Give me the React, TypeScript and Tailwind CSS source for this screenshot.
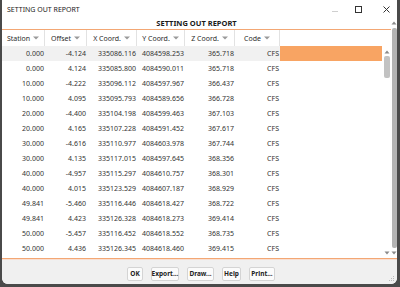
import React from "react";

const rows: string[][] = [
  ["0.000", "-4.124", "335086.116", "4084598.253", "365.718", "CFS"],
  ["0.000", "4.124", "335085.800", "4084590.011", "365.718", "CFS"],
  ["10.000", "-4.222", "335096.112", "4084597.967", "366.437", "CFS"],
  ["10.000", "4.095", "335095.793", "4084589.656", "366.728", "CFS"],
  ["20.000", "-4.400", "335104.198", "4084599.463", "367.103", "CFS"],
  ["20.000", "4.165", "335107.228", "4084591.452", "367.617", "CFS"],
  ["30.000", "-4.616", "335110.977", "4084603.978", "367.744", "CFS"],
  ["30.000", "4.135", "335117.015", "4084597.645", "368.356", "CFS"],
  ["40.000", "-4.957", "335115.297", "4084610.757", "368.301", "CFS"],
  ["40.000", "4.015", "335123.529", "4084607.187", "368.929", "CFS"],
  ["49.841", "-5.460", "335116.446", "4084618.427", "368.722", "CFS"],
  ["49.841", "4.423", "335126.328", "4084618.273", "369.414", "CFS"],
  ["50.000", "-5.457", "335116.452", "4084618.552", "368.735", "CFS"],
  ["50.000", "4.436", "335126.345", "4084618.460", "369.415", "CFS"],
];

const cols = [
  { name: "Station", w: "w-[43px]" },
  { name: "Offset", w: "w-[42px]" },
  { name: "X Coord.", w: "w-[50px]" },
  { name: "Y Coord.", w: "w-[48px]" },
  { name: "Z Coord.", w: "w-[50px]" },
  { name: "Code", w: "w-[45px]" },
];

function Tri() {
  return (
    <svg width="6" height="4" viewBox="0 0 6 4" className="ml-[3px]">
      <path d="M0 0.5 L6 0.5 L3 3.5 Z" fill="#9a9a9a" />
    </svg>
  );
}

function Up() {
  return (
    <svg width="6" height="4" viewBox="0 0 6 4">
      <path d="M0.5 3.5 L5.5 3.5 L3 0.5 Z" fill="#8a8a8a" />
    </svg>
  );
}
function Down() {
  return (
    <svg width="6" height="4" viewBox="0 0 6 4">
      <path d="M0.5 0.5 L5.5 0.5 L3 3.5 Z" fill="#8a8a8a" />
    </svg>
  );
}

function Btn({ label, w }: { label: string; w: string }) {
  return (
    <div
      className={`${w} h-[14px] flex items-center justify-center bg-[#fbfbfb] border border-[#d4d4d4] rounded-[2px] text-[6.5px] font-bold text-[#222]`}
    >
      {label}
    </div>
  );
}

export default function App() {
  return (
    <div
      className="w-[400px] h-[287px] bg-[#4a4a4a] flex flex-col"
      style={{ fontFamily: '"Noto Sans", "Open Sans", sans-serif' }}
    >
      <div className="ml-[2px] mr-[3px] h-[284px] bg-white rounded-b-[6px] overflow-hidden flex flex-col">
        {/* Title bar */}
        <div className="h-[18px] flex items-center pl-[5px] text-[7px] text-[#1a1a1a]">
          <span className="flex-1 leading-none">SETTING OUT REPORT</span>
          <svg width="60" height="12" viewBox="0 0 60 12" className="mr-[5px]">
            <line x1="0" y1="8.5" x2="6" y2="8.5" stroke="#cfcfcf" strokeWidth="1" />
            <rect x="23.5" y="3.5" width="6" height="6" fill="none" stroke="#333" strokeWidth="1" />
            <path d="M51.5 3.5 L57.5 9.5 M57.5 3.5 L51.5 9.5" stroke="#333" strokeWidth="1" />
          </svg>
        </div>

        {/* Middle */}
        <div className="h-[240px] flex">
          <div className="flex-1 flex flex-col">
            <div className="h-[11px] flex items-center justify-center text-[7.5px] font-bold text-[#1a1a1a] leading-none">
              SETTING OUT REPORT
            </div>
            <div className="h-px bg-[#f3a774]" />
            {/* Header */}
            <div className="h-[16px] flex items-stretch">
              {cols.map((c) => (
                <div
                  key={c.name}
                  className={`${c.w} flex items-center justify-center border-r border-[#e2e2e2] text-[7px] text-[#2a2a2a]`}
                >
                  <span className="leading-none">{c.name}</span>
                  <Tri />
                </div>
              ))}
              <div className="flex-1" />
            </div>
            {/* Body */}
            <div className="flex-1 flex">
              <div className="flex-1 flex flex-col">
                {rows.map((r, i) => (
                  <div
                    key={i}
                    className={`h-[15px] flex items-center text-[7px] text-[#333] ${
                      i === 0 ? "bg-[#f1f1f1]" : ""
                    }`}
                  >
                    {r.map((v, j) => (
                      <div key={j} className={`${cols[j].w} text-right pr-[1px] leading-none`}>
                        {v}
                      </div>
                    ))}
                    <div className={`flex-1 h-full ${i === 0 ? "bg-[#f8a463]" : "bg-white"}`} />
                  </div>
                ))}
              </div>
              {/* inner scrollbar */}
              <div className="w-[9px] flex flex-col items-center">
                <div className="h-[8px] flex items-end justify-center">
                  <Up />
                </div>
                <div className="flex-1 flex flex-col items-center pt-[2px]">
                  <div className="w-[6px] h-[22px] bg-[#c2c2c2] rounded-[2px]" />
                </div>
                <div className="h-[10px] flex items-center justify-center">
                  <Down />
                </div>
              </div>
            </div>
          </div>
          {/* outer scrollbar */}
          <div className="w-[6px] flex flex-col items-center">
            <div className="h-[10px] flex items-center justify-center">
              <Up />
            </div>
            <div className="w-[5px] h-[220px] bg-[#b4b4b4] rounded-[2px]" />
            <div className="flex-1 flex items-center justify-center">
              <Down />
            </div>
          </div>
        </div>

        <div className="h-px bg-[#f3a774]" />
        <div className="h-px bg-[#f9ded0]" />
        {/* Footer */}
        <div className="flex-1 bg-[#f0f0f0] relative">
          <div className="flex justify-center gap-[8px] pt-[7px] pl-[3px]">
            <Btn label="OK" w="w-[16px]" />
            <Btn label="Export..." w="w-[28px]" />
            <Btn label="Draw..." w="w-[27px]" />
            <Btn label="Help" w="w-[19px]" />
            <Btn label="Print..." w="w-[26px]" />
          </div>
          <svg width="6" height="6" viewBox="0 0 6 6" className="absolute right-[2px] bottom-[2px]">
            <rect x="4" y="0" width="1" height="1" fill="#bbb" />
            <rect x="2" y="2" width="1" height="1" fill="#bbb" />
            <rect x="4" y="2" width="1" height="1" fill="#bbb" />
            <rect x="0" y="4" width="1" height="1" fill="#bbb" />
            <rect x="2" y="4" width="1" height="1" fill="#bbb" />
            <rect x="4" y="4" width="1" height="1" fill="#bbb" />
          </svg>
        </div>
      </div>
    </div>
  );
}
